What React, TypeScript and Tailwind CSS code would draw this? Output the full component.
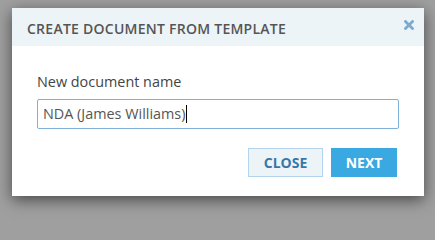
export default function App() {
  return (
    <div className="h-screen min-h-[209px] w-full overflow-hidden bg-[#9f9f9f] pt-[8px] pl-[12px] font-['Open_Sans',sans-serif]">
      <div className="flex h-[188px] w-[412px] flex-col bg-white shadow-[0_4px_14px_rgba(0,0,0,0.55)]">
        <div className="flex h-[38px] items-start justify-between bg-[#edf4f8] pl-[15px] pr-[10px]">
          <h2 className="pt-[11px] text-[14px] leading-[20px] font-semibold uppercase tracking-[0.25px] text-[#555]">
            Create document from template
          </h2>
          <svg className="mt-[12px]" width="10" height="10" viewBox="0 0 10 10">
            <path d="M1.5 1.5 L8.5 8.5 M8.5 1.5 L1.5 8.5" stroke="#7eaad0" strokeWidth="2.8" strokeLinecap="square" />
          </svg>
        </div>
        <div className="flex flex-col px-[25px] pt-[26px]">
          <label className="text-[14.4px] leading-[20px] text-[#444]">New document name</label>
          <div className="mt-[7px] flex h-[30px] items-center rounded-[2px] border border-[#7fb1da] px-[5px] text-[14.4px] text-[#555]">
            <span>NDA (James Williams)</span>
            <span className="ml-[1px] h-[18px] w-[1px] bg-black" />
          </div>
          <div className="mt-[19px] flex justify-end gap-[8px] pr-[2px]">
            <button className="h-[29px] w-[75px] border border-[#b3d4ec] bg-[#edf4f8] text-[14px] font-bold text-[#3a77a8]">
              CLOSE
            </button>
            <button className="h-[29px] w-[66px] bg-[#3aa9e1] text-[14px] font-bold text-white">
              NEXT
            </button>
          </div>
        </div>
      </div>
    </div>
  );
}
